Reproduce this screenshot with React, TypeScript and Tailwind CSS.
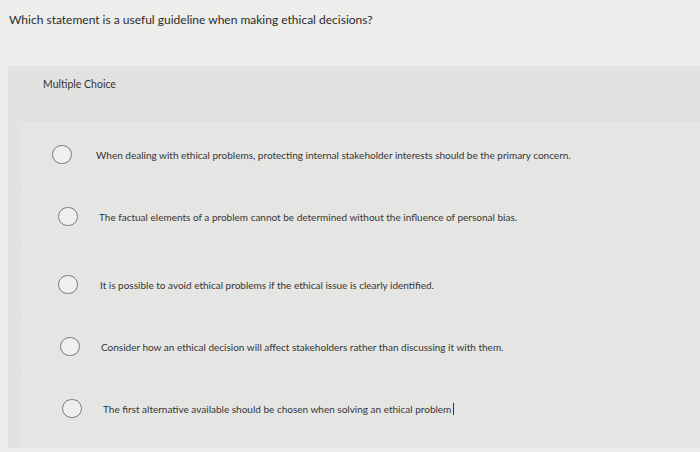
const options = [
  {
    text: 'When dealing with ethical problems, protecting internal stakeholder interests should be the primary concern.',
    row: 'h-[62px] pl-[30px]',
    gap: 'gap-[24px]',
  },
  {
    text: 'The factual elements of a problem cannot be determined without the influence of personal bias.',
    row: 'h-[62px] pl-[36px]',
    gap: 'gap-[21px]',
  },
  {
    text: 'It is possible to avoid ethical problems if the ethical issue is clearly identified.',
    row: 'h-[70px] pl-[36px] pt-[4px]',
    gap: 'gap-[22px]',
  },
  {
    text: 'Consider how an ethical decision will affect stakeholders rather than discussing it with them.',
    row: 'h-[58px] pl-[38px]',
    gap: 'gap-[21px]',
  },
  {
    text: 'The first alternative available should be chosen when solving an ethical problem',
    row: 'h-[66px] pl-[40px]',
    gap: 'gap-[21px]',
    caret: true,
  },
];

const Radio = () => (
  <span className="block h-[19px] w-[20px] shrink-0 rounded-full border-[1.5px] border-[#7a7a78] bg-[#efefed]" />
);

const App = () => {
  return (
    <div
      className="h-[452px] w-[700px] overflow-hidden bg-[#ededeb] text-[#2a2a2a]"
      style={{ fontFamily: 'Lato, "Open Sans", sans-serif' }}
    >
      <h1 className="pl-[9px] pt-[13px] text-[12px] leading-[14px] text-[#2b2b2b]">
        Which statement is a useful guideline when making ethical decisions?
      </h1>

      <section className="ml-[8px] mt-[39px] h-[382px] bg-[#e2e2e0]">
        <div className="mb-[19px] flex h-[38px] items-center pl-[35px] text-[10.5px] text-[#333]">
          Multiple Choice
        </div>
        <div className="ml-[14px] h-[325px] bg-[#e5e5e3]">
          {options.map((o, i) => (
            <div
              key={i}
              className={`flex items-center border-t border-[#e9e9e7] ${o.row} ${o.gap}`}
            >
              <Radio />
              <span className="flex items-center text-[10px] leading-[12px] text-[#353535]">
                {o.text}
                {o.caret && <span className="ml-[2px] inline-block h-[12px] w-px bg-[#333]" />}
              </span>
            </div>
          ))}
        </div>
      </section>
    </div>
  );
};

export default App;
